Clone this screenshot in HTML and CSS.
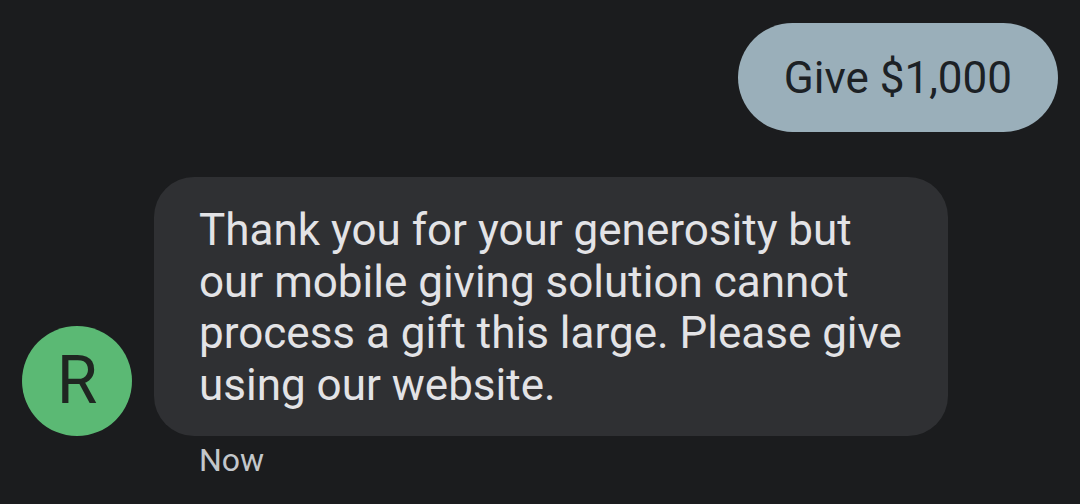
FILE: index.html
```html
<!DOCTYPE html>
<html lang="en">
<head>
    <meta charset="UTF-8">
    <meta name="viewport" content="width=device-width, initial-scale=1.0">
    <title>Messages</title>
    <link rel="stylesheet" href="styles.css">
</head>
<body>

<div class="thread">
    <!-- Outgoing message -->
    <div class="row sent">
        <div class="bubble bubble-sent">Give $1,000</div>
    </div>

    <!-- Incoming message -->
    <div class="row received">
        <div class="avatar">R</div>
        <div class="message">
            <div class="bubble bubble-received">Thank you for your generosity but our mobile giving solution cannot process a gift this large. Please give using our website.</div>
            <div class="timestamp">Now</div>
        </div>
    </div>
</div>

</body>
</html>
```

FILE: styles.css
```css
body {
    font-family: Roboto, "Noto Sans", sans-serif;
    margin: 0;
    padding: 0;
    background-color: #1b1c1e;
    color: #e3e3e6;
}

.thread {
    padding: 23px 22px 0 22px;
    display: flex;
    flex-direction: column;
    gap: 45px;
}

.row {
    display: flex;
}

.sent {
    justify-content: flex-end;
}

.bubble {
    box-sizing: border-box;
}

.bubble-sent {
    height: 109px;
    line-height: 111px;
    padding: 0 46px;
    border-radius: 55px;
    background-color: #9aafba;
    color: #1c2125;
    font-size: 44px;
}

.received {
    align-items: flex-start;
    gap: 22px;
}

.avatar {
    width: 110px;
    height: 110px;
    border-radius: 50%;
    background-color: #5bb974;
    color: #1f2621;
    font-size: 66px;
    line-height: 110px;
    text-align: center;
    margin-top: 149px; /* bottom lines up with bubble */
    flex-shrink: 0;
}

.message {
    display: flex;
    flex-direction: column;
}

.bubble-received {
    max-width: 794px;
    padding: 28px 38px 25px 45px;
    border-radius: 40px;
    background-color: #2f3033;
    font-size: 44px;
    line-height: 51.5px;
}

.timestamp {
    padding-left: 45px;
    margin-top: 4px;
    font-size: 32px;
    line-height: 40px;
    color: #c3c7cb;
}
```
